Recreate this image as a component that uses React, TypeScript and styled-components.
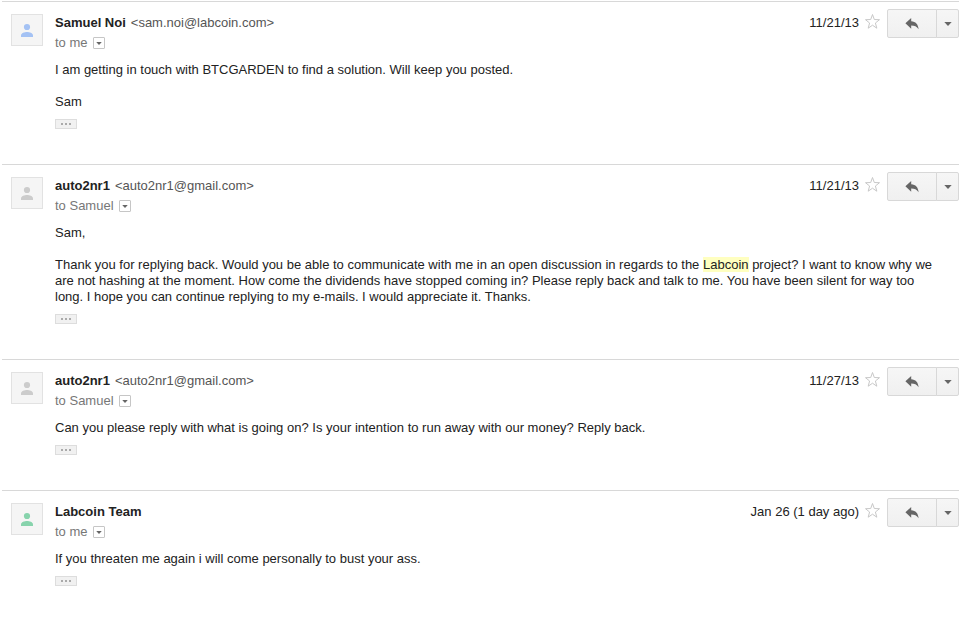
import React from "react";
import styled, { createGlobalStyle } from "styled-components";

const GlobalStyle = createGlobalStyle`
  *, *::before, *::after { box-sizing: border-box; }
  body {
    margin: 0;
    background: #fff;
    color: #222;
    font: 13px/16px "Liberation Sans", Arial, sans-serif;
  }
  button { margin: 0; padding: 0; font: inherit; cursor: pointer; }
`;

const Thread = styled.main`
  padding: 1px 13px 0 2px;
`;

const Message = styled.article`
  display: grid;
  grid-template-columns: 32px minmax(0, 1fr);
  column-gap: 12px;
  padding: 7px 0 35px 9px;
  border-top: 1px solid #d8d8d8;
`;

const Avatar = styled.div`
  display: flex;
  align-items: center;
  justify-content: center;
  width: 32px;
  height: 32px;
  margin-top: 5px;
  border: 1px solid #e2e2e2;
  background: #f5f5f5;
  color: ${(p) => p.color};
`;

const Header = styled.header`
  display: flex;
  justify-content: space-between;
  align-items: flex-start;
`;

const Identity = styled.div`
  padding-top: 5px;
`;

const SenderLine = styled.div`
  display: flex;
  gap: 5px;
  line-height: 18px;
`;

const SenderName = styled.h2`
  margin: 0;
  font-size: 13px;
  font-weight: bold;
  line-height: 18px;
`;

const Address = styled.span`
  color: #555;
`;

const RecipientLine = styled.div`
  display: flex;
  align-items: center;
  gap: 5px;
  padding-top: 2px;
  line-height: 18px;
  color: #777;
`;

const DetailsButton = styled.button`
  display: flex;
  align-items: center;
  justify-content: center;
  width: 12px;
  height: 12px;
  border: 1px solid #c6c6c6;
  border-radius: 1px;
  background: #fff;
  color: #666;
`;

const Actions = styled.div`
  display: flex;
  align-items: flex-start;
`;

const SentDate = styled.time`
  padding: 6px 5px 0 0;
`;

const StarButton = styled.button`
  display: flex;
  width: 17px;
  height: 17px;
  margin: 4px 6px 0 0;
  border: 0;
  background: none;
`;

const ActionButton = styled.button<{ $side: "left" | "right" }>`
  display: flex;
  align-items: center;
  justify-content: center;
  width: ${(p) => (p.$side === "left" ? 50 : 23)}px;
  height: 29px;
  margin-left: ${(p) => (p.$side === "left" ? 0 : -1)}px;
  border: 1px solid #d8d8d8;
  border-radius: ${(p) => (p.$side === "left" ? "2px 0 0 2px" : "0 2px 2px 0")};
  background: linear-gradient(#f6f6f6, #f0f0f0);
  color: #666;
`;

const Body = styled.div`
  padding: 10px 20px 0 0;
`;

const Paragraph = styled.p`
  margin: 0;
  & + & { margin-top: 16px; }
`;

const Highlight = styled.mark`
  background: #ffffc0;
  color: inherit;
`;

const TrimmedButton = styled.button`
  display: flex;
  align-items: center;
  justify-content: center;
  width: 22px;
  height: 10px;
  margin-top: 9px;
  border: 1px solid #ddd;
  background: #f1f1f1;
  color: #aaa;
`;

const PersonIcon = () => (
  <svg width="14" height="14" viewBox="0 0 14 14" fill="currentColor" aria-hidden="true">
    <circle cx="7" cy="4" r="3.1" />
    <path d="M1 14v-1.7C1 10.2 4.6 9 7 9s6 1.2 6 3.3V14z" />
  </svg>
);

const Caret = ({ width }: { width: number }) => (
  <svg width={width} height={width === 8 ? 4 : 3} viewBox="0 0 8 4" preserveAspectRatio="none" fill="currentColor" aria-hidden="true">
    <path d="M0.3 0h7.4L4 4z" />
  </svg>
);

const StarIcon = () => (
  <svg width="17" height="17" viewBox="0 0 17 17" fill="#fff" stroke="#c8c8c8" aria-hidden="true">
    <path d="M8.5 1.5l1.8 5 5.2.2-4.1 3.3 1.4 5.2-4.3-3-4.3 3 1.4-5.2L1.5 6.7l5.2-.2z" />
  </svg>
);

const ReplyIcon = () => (
  <svg width="14" height="12" viewBox="0 0 14 12" fill="currentColor" aria-hidden="true">
    <path d="M6.2 0v3.2C10.6 3.4 13.2 6.2 13.6 11.2 11.8 8.5 9.5 7.5 6.2 7.5v3.2L0.4 5.3z" />
  </svg>
);

const DotsIcon = () => (
  <svg width="10" height="2" viewBox="0 0 10 2" fill="currentColor" aria-hidden="true">
    <path d="M0 0h2v2H0zM4 0h2v2H4zM8 0h2v2H8z" />
  </svg>
);

type MessageData = {
  name: string;
  address?: string;
  to: string;
  date: string;
  color: string;
  paragraphs: React.ReactNode[];
};

const messages: MessageData[] = [
  {
    name: "Samuel Noi",
    address: "sam.noi@labcoin.com",
    to: "me",
    date: "11/21/13",
    color: "#a4c2f4",
    paragraphs: ["I am getting in touch with BTCGARDEN to find a solution. Will keep you posted.", "Sam"],
  },
  {
    name: "auto2nr1",
    address: "auto2nr1@gmail.com",
    to: "Samuel",
    date: "11/21/13",
    color: "#cccccc",
    paragraphs: [
      "Sam,",
      <>
        Thank you for replying back. Would you be able to communicate with me in an open discussion in regards to the{" "}
        <Highlight>Labcoin</Highlight> project? I want to know why we are not hashing at the moment. How come the
        dividends have stopped coming in? Please reply back and talk to me. You have been silent for way too long. I
        hope you can continue replying to my e-mails. I would appreciate it. Thanks.
      </>,
    ],
  },
  {
    name: "auto2nr1",
    address: "auto2nr1@gmail.com",
    to: "Samuel",
    date: "11/27/13",
    color: "#cccccc",
    paragraphs: ["Can you please reply with what is going on? Is your intention to run away with our money? Reply back."],
  },
  {
    name: "Labcoin Team",
    to: "me",
    date: "Jan 26 (1 day ago)",
    color: "#87d3ac",
    paragraphs: ["If you threaten me again i will come personally to bust your ass."],
  },
];

const MessageItem = ({ message }: { message: MessageData }) => (
  <Message>
    <Avatar color={message.color}>
      <PersonIcon />
    </Avatar>
    <div>
      <Header>
        <Identity>
          <SenderLine>
            <SenderName>{message.name}</SenderName>
            {message.address && <Address>&lt;{message.address}&gt;</Address>}
          </SenderLine>
          <RecipientLine>
            to {message.to}
            <DetailsButton aria-label="Show details">
              <Caret width={6} />
            </DetailsButton>
          </RecipientLine>
        </Identity>
        <Actions>
          <SentDate>{message.date}</SentDate>
          <StarButton aria-label="Star">
            <StarIcon />
          </StarButton>
          <ActionButton $side="left" aria-label="Reply">
            <ReplyIcon />
          </ActionButton>
          <ActionButton $side="right" aria-label="More">
            <Caret width={8} />
          </ActionButton>
        </Actions>
      </Header>
      <Body>
        {message.paragraphs.map((text, i) => (
          <Paragraph key={i}>{text}</Paragraph>
        ))}
        <TrimmedButton aria-label="Show trimmed content">
          <DotsIcon />
        </TrimmedButton>
      </Body>
    </div>
  </Message>
);

export default function App() {
  return (
    <>
      <GlobalStyle />
      <Thread>
        {messages.map((message, i) => (
          <MessageItem key={i} message={message} />
        ))}
      </Thread>
    </>
  );
}
